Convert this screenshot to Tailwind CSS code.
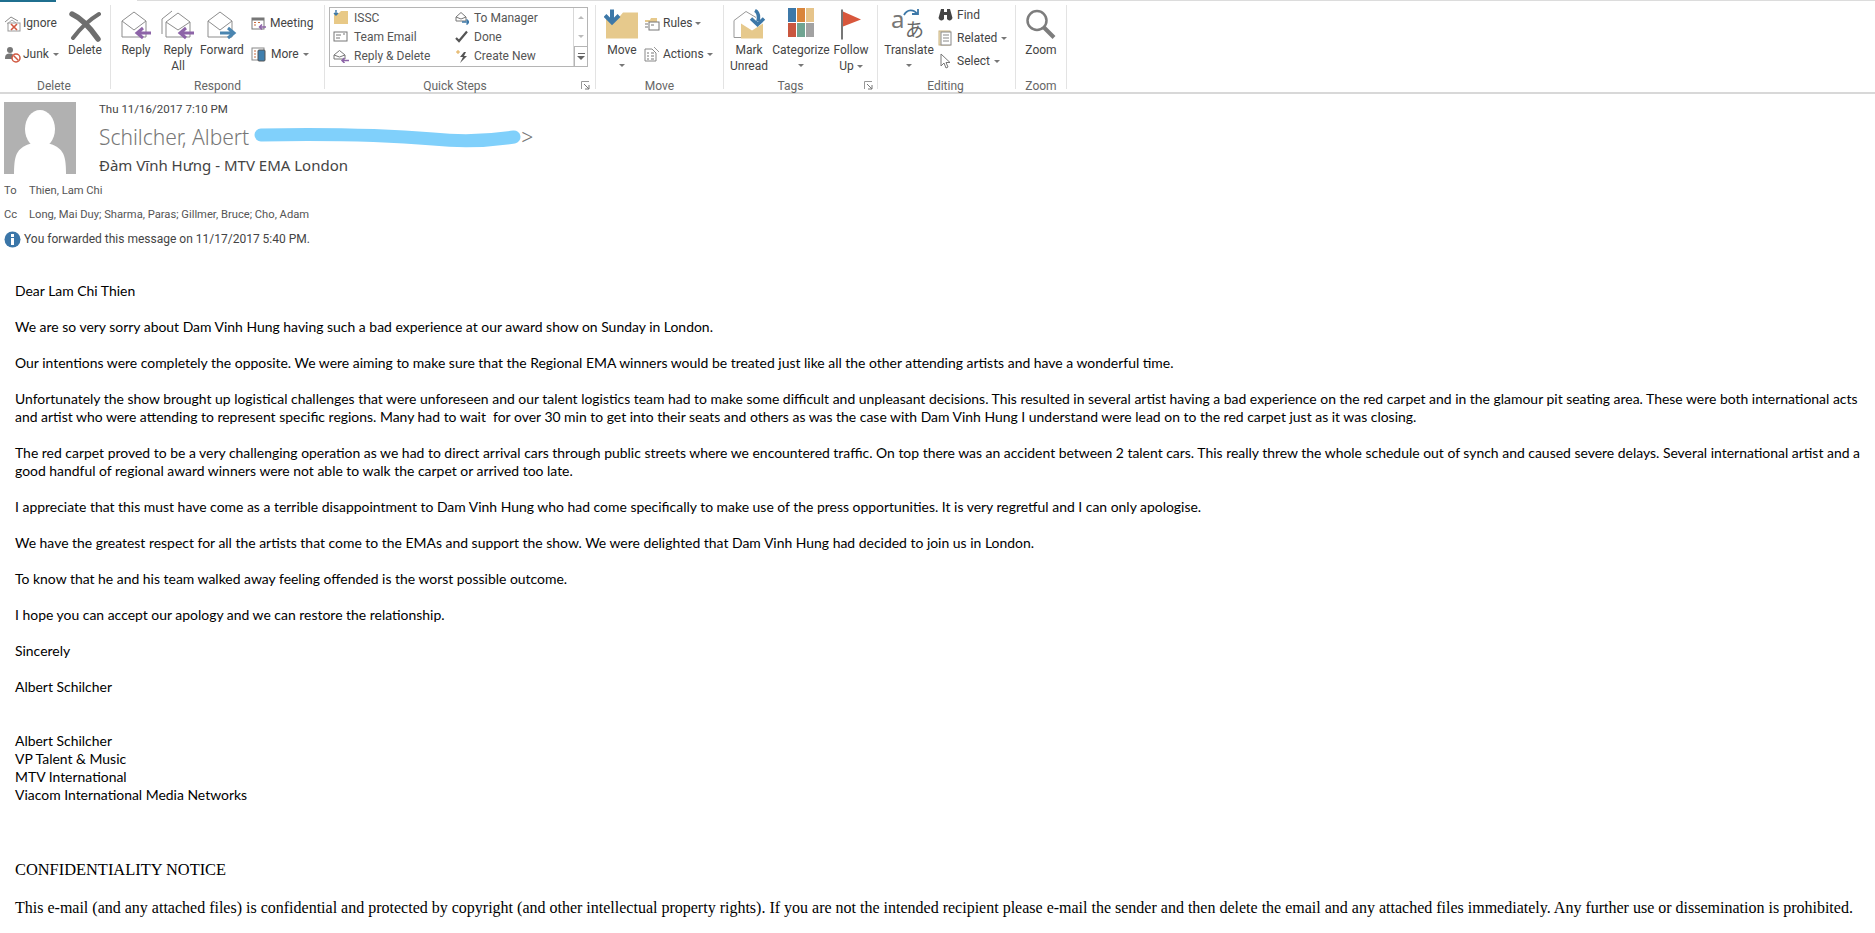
<!doctype html>
<html lang="en">
  <head>
    <meta charset="UTF-8" />
    <title>Đàm Vĩnh Hưng - MTV EMA London</title>
    <script src="https://cdn.jsdelivr.net/npm/@tailwindcss/browser@4"></script>
  </head>
  <body class="bg-white overflow-hidden h-[933px] font-['Roboto',sans-serif]">
    <!-- Tab strip edge -->
    <div class="flex h-[2px]">
      <div class="w-[56px] bg-[#1f6f8f]"></div>
      <div class="w-[81px] bg-white"></div>
      <div class="flex-1 bg-[#dcdcdc] h-px"></div>
    </div>

    <!-- Ribbon -->
    <div class="flex h-[92px] border-b-2 border-[#d8d8d8] text-[12px] leading-[16px] text-[#444]">
      <!-- Delete -->
      <div class="w-[111px] flex flex-col border-r border-[#e3e3e3] my-[3px]">
        <div class="flex h-[73px] shrink-0">
          <div class="w-[66px] pl-[4px] pt-[10px] flex flex-col gap-[15px]">
            <div class="flex items-center gap-[2px] h-[16px]">
              <svg width="17" height="17" viewBox="0 0 17 17" fill="none">
                <path d="M1 7 L7 2 L14 6" stroke="#8a8a8a" />
                <path d="M3 9 L8 5 L12 8" stroke="#aaa" />
                <rect x="4" y="8" width="12" height="8" fill="#fff" stroke="#999" />
                <path d="M7 9 L13 15 M13 9 L7 15" stroke="#d0573f" stroke-width="1.6" />
              </svg>
              <span>Ignore</span>
            </div>
            <div class="flex items-center gap-[2px] h-[16px]">
              <svg width="17" height="17" viewBox="0 0 17 17" fill="none">
                <circle cx="6" cy="4" r="3" fill="#777" />
                <path d="M1 13 C1 8 3 7.5 6 7.5 C9 7.5 10 9 10 13 Z" fill="#777" />
                <circle cx="12" cy="12" r="4" fill="#fff" stroke="#d0573f" stroke-width="1.5" />
                <path d="M9.5 9.5 L14.5 14.5" stroke="#d0573f" stroke-width="1.5" />
              </svg>
              <span>Junk</span>
              <span class="ml-[2px] border-x-[3px] border-t-[3px] border-x-transparent border-t-[#777]"></span>
            </div>
          </div>
          <div class="w-[38px] flex flex-col items-center pt-[5px]">
            <svg class="h-[32px] shrink-0" width="32" height="30" viewBox="0 0 32 30" fill="none">
              <path d="M3 3 C12 7 22 18 29 28" stroke="#6e6e6e" stroke-width="5.5" stroke-linecap="round" />
              <path d="M30 3 C20 9 10 19 4 27" stroke="#6e6e6e" stroke-width="4" stroke-linecap="round" />
            </svg>
            <span>Delete</span>
          </div>
        </div>
        <div class="h-[15px] -mb-[4px] text-center text-[#666] pr-[2px]">Delete</div>
      </div>

      <!-- Respond -->
      <div class="w-[214px] flex flex-col border-r border-[#e3e3e3] my-[3px]">
        <div class="flex h-[73px] shrink-0 pl-[4px]">
          <div class="w-[42px] flex flex-col items-center pt-[4px]">
            <svg class="h-[32px] shrink-0" width="32" height="30" viewBox="0 0 32 30" fill="none">
              <path d="M2 11 L14 2 L26 11 V27 H2 Z M2 11 L14 20 L26 11" stroke="#8d8d8d" />
              <path d="M31 23 H18 M23 18 L17 23 L23 28" stroke="#8d64a8" stroke-width="3" />
            </svg>
            <span class="mt-[1px]">Reply</span>
          </div>
          <div class="w-[42px] flex flex-col items-center pt-[4px]">
            <svg class="h-[32px] shrink-0" width="34" height="30" viewBox="0 0 34 30" fill="none">
              <path d="M1 24 V9 L11 1" stroke="#8d8d8d" />
              <path d="M5 12 L17 3 L29 12 V27 H5 Z M5 12 L17 20 L29 12" stroke="#8d8d8d" />
              <path d="M33 23 H20 M25 18 L19 23 L25 28" stroke="#8d64a8" stroke-width="3" />
            </svg>
            <span class="mt-[1px] text-center">Reply<br />All</span>
          </div>
          <div class="w-[46px] flex flex-col items-center pt-[4px]">
            <svg class="h-[32px] shrink-0" width="32" height="30" viewBox="0 0 32 30" fill="none">
              <path d="M2 11 L14 2 L26 11 V27 H2 Z M2 11 L14 20 L26 11" stroke="#8d8d8d" />
              <path d="M14 23 H27 M22 18 L28 23 L22 28" stroke="#4a85b0" stroke-width="3" />
            </svg>
            <span class="mt-[1px]">Forward</span>
          </div>
          <div class="ml-[6px] pt-[10px] flex flex-col gap-[15px]">
            <div class="flex items-center gap-[4px] h-[16px]">
              <svg width="15" height="15" viewBox="0 0 15 15" fill="none">
                <rect x="1" y="2" width="12" height="11" fill="#fff" stroke="#777" />
                <rect x="1" y="2" width="12" height="2.5" fill="#777" />
                <path d="M3 6.5 H5 M7 6.5 H9 M3 9 H5" stroke="#c96a3c" stroke-width="1.2" />
                <path d="M15 11 H9 M11 8.5 L8.5 11 L11 13.5" stroke="#8d64a8" stroke-width="1.5" />
              </svg>
              <span>Meeting</span>
            </div>
            <div class="flex items-center gap-[4px] h-[16px]">
              <svg width="16" height="15" viewBox="0 0 16 15" fill="none">
                <rect x="1" y="1" width="12" height="12" fill="#fff" stroke="#888" />
                <path d="M3 4 H5 M3 7 H5 M3 10 H5" stroke="#c96a3c" />
                <rect x="7" y="3" width="7" height="11" rx="1" fill="#3f7fae" stroke="#555" />
              </svg>
              <span>More</span>
              <span class="border-x-[3px] border-t-[3px] border-x-transparent border-t-[#777]"></span>
            </div>
          </div>
        </div>
        <div class="h-[15px] -mb-[4px] text-center text-[#666]">Respond</div>
      </div>

      <!-- Quick Steps -->
      <div class="w-[271px] flex flex-col border-r border-[#e3e3e3] my-[3px]">
        <div class="h-[73px] shrink-0 pl-[4px] pt-[2px]">
          <div class="w-[259px] h-[60px] border border-[#b5b5b5] flex">
            <div class="flex-1 grid grid-cols-[122px_1fr] grid-rows-3 items-center pl-[3px] text-[#555]">
              <div class="flex items-center gap-[5px]">
                <svg width="16" height="16" viewBox="0 0 16 16" fill="none">
                  <path d="M1 3 H6 L8 1 H15 V14 H1 Z" fill="#e8c987" />
                  <path d="M3 0 V4 M1 3 L3 5 L5 3" stroke="#3d78a8" stroke-width="1.4" />
                </svg>
                <span>ISSC</span>
              </div>
              <div class="flex items-center gap-[5px]">
                <svg width="14" height="14" viewBox="0 0 14 14" fill="none">
                  <path d="M1 6 L6 1.5 L11 6 V10 H1 Z M1 6 L6 8 L11 6" stroke="#777" />
                  <path d="M7 11 H14 M11.5 8.5 L14 11 L11.5 13.5" stroke="#3d78a8" stroke-width="1.5" />
                </svg>
                <span>To Manager</span>
              </div>
              <div class="flex items-center gap-[5px]">
                <svg width="16" height="14" viewBox="0 0 16 14" fill="none">
                  <rect x="1" y="2" width="13" height="9" stroke="#777" />
                  <path d="M3 5 H8 M3 8 H7 M10 4 H12" stroke="#777" />
                </svg>
                <span>Team Email</span>
              </div>
              <div class="flex items-center gap-[5px]">
                <svg width="14" height="14" viewBox="0 0 14 14" fill="none">
                  <path d="M1 8 L4 11 L12 1.5" stroke="#555" stroke-width="2.2" />
                </svg>
                <span>Done</span>
              </div>
              <div class="flex items-center gap-[5px]">
                <svg width="16" height="14" viewBox="0 0 16 14" fill="none">
                  <path d="M1 6 L6.5 1.5 L12 6 V10 H1 Z M1 6 L6.5 8 L12 6" stroke="#777" />
                  <path d="M16 11.5 H9 M11.5 9 L9 11.5 L11.5 14" stroke="#8d64a8" stroke-width="1.5" />
                </svg>
                <span>Reply &amp; Delete</span>
              </div>
              <div class="flex items-center gap-[5px]">
                <svg width="14" height="15" viewBox="0 0 14 15" fill="none">
                  <path d="M9 3 L5 8 H8 L5 14 L12 7 H9 L11 3 Z" fill="#555" />
                  <path d="M3 1 V5 M1 3 H5" stroke="#e0a94e" />
                </svg>
                <span>Create New</span>
              </div>
            </div>
            <div class="w-[14px] flex flex-col border-l border-[#d8d8d8]">
              <div class="flex-1 flex items-center justify-center">
                <span class="border-x-[3px] border-b-[3px] border-x-transparent border-b-[#bbb]"></span>
              </div>
              <div class="flex-1 flex items-center justify-center">
                <span class="border-x-[3px] border-t-[3px] border-x-transparent border-t-[#bbb]"></span>
              </div>
              <div class="flex-1 flex flex-col gap-[2px] items-center justify-center border border-[#b5b5b5] -mr-px -mb-px">
                <span class="w-[7px] h-px bg-[#666]"></span>
                <span class="border-x-[4px] border-t-[4px] border-x-transparent border-t-[#666]"></span>
              </div>
            </div>
          </div>
        </div>
        <div class="relative h-[15px] -mb-[4px] text-center text-[#666] pr-[10px]">
          Quick Steps
          <svg class="absolute right-[5px] top-[3px]" width="9" height="9" viewBox="0 0 9 9" fill="none">
            <path d="M0.5 8 V0.5 H8" stroke="#999" />
            <path d="M3 3 L8 8 M4 8 H8 V4" stroke="#777" />
          </svg>
        </div>
      </div>

      <!-- Move -->
      <div class="w-[128px] flex flex-col border-r border-[#e3e3e3] my-[3px]">
        <div class="flex h-[73px] shrink-0 pl-[6px]">
          <div class="w-[40px] flex flex-col items-center pt-[3px]">
            <svg class="h-[33px] shrink-0" width="36" height="30" viewBox="0 0 36 30" fill="none">
              <path d="M2 9 H14 L19 3 H34 V29 H2 Z" fill="#e6c98c" />
              <path d="M8 0 V10 M1 6 L8 13 L15 6" stroke="#3d78a8" stroke-width="4" />
            </svg>
            <span class="mt-[1px]">Move</span>
            <span class="mt-[6px] border-x-[3px] border-t-[3px] border-x-transparent border-t-[#777]"></span>
          </div>
          <div class="ml-[2px] pt-[10px] flex flex-col gap-[15px]">
            <div class="flex items-center gap-[3px] h-[16px]">
              <svg width="16" height="15" viewBox="0 0 16 15" fill="none">
                <path d="M1 4 H6 L7 2 H13 V6 H1 Z" fill="#e6c98c" />
                <rect x="5" y="6" width="10" height="8" fill="#fff" stroke="#777" />
                <path d="M1 8 H4 M1 11 H4 M7 9 H10" stroke="#777" />
              </svg>
              <span>Rules</span>
              <span class="border-x-[3px] border-t-[3px] border-x-transparent border-t-[#777]"></span>
            </div>
            <div class="flex items-center gap-[3px] h-[16px]">
              <svg width="16" height="16" viewBox="0 0 16 16" fill="none">
                <path d="M1 3 H8 L12 7 V15 H1 Z" fill="#fff" stroke="#888" />
                <path d="M3 7 H5 M7 7 H10 M3 10 H5 M7 10 H10 M3 13 H5 M7 13 H10" stroke="#777" />
                <path d="M10 1 L15 6" stroke="#999" />
              </svg>
              <span>Actions</span>
              <span class="border-x-[3px] border-t-[3px] border-x-transparent border-t-[#777]"></span>
            </div>
          </div>
        </div>
        <div class="h-[15px] -mb-[4px] text-center text-[#666]">Move</div>
      </div>

      <!-- Tags -->
      <div class="w-[154px] flex flex-col border-r border-[#e3e3e3] my-[3px]">
        <div class="flex h-[73px] shrink-0 pl-[4px]">
          <div class="w-[42px] flex flex-col items-center pt-[3px]">
            <svg class="h-[33px] shrink-0" width="34" height="30" viewBox="0 0 34 30" fill="none">
              <path d="M2 11 L14 2 L24 8 M2 11 V28 H10" stroke="#999" />
              <path d="M9 14 L20 21 L31 14 V29 H9 Z" fill="#e6c98c" />
              <path d="M23 1 C27 3 27 7 26 12 M19 9 L25.5 15 L32 9" stroke="#3d78a8" stroke-width="3.5" />
            </svg>
            <span class="mt-[1px] text-center">Mark<br />Unread</span>
          </div>
          <div class="w-[62px] flex flex-col items-center pt-[3px]">
            <div class="h-[29px] shrink-0 grid grid-cols-3 grid-rows-2 gap-px w-[26px]">
              <span class="bg-[#3d78a8]"></span>
              <span class="bg-[#d9853b]"></span>
              <span class="bg-[#e6c48a]"></span>
              <span class="bg-[#c9573f]"></span>
              <span class="bg-[#6fa491]"></span>
              <span class="bg-[#a2a2a2]"></span>
            </div>
            <span class="mt-[5px]">Categorize</span>
            <span class="mt-[6px] border-x-[3px] border-t-[3px] border-x-transparent border-t-[#777]"></span>
          </div>
          <div class="w-[38px] flex flex-col items-center pt-[3px]">
            <svg class="h-[33px] shrink-0" width="24" height="30" viewBox="0 0 24 30" fill="none">
              <path d="M3 0 V30" stroke="#777" stroke-width="2" />
              <path d="M4 2 L22 10 L4 17 Z" fill="#d8573c" />
            </svg>
            <span class="mt-[1px]">Follow</span>
            <span class="flex items-center gap-[3px]">
              Up
              <span class="border-x-[3px] border-t-[3px] border-x-transparent border-t-[#777]"></span>
            </span>
          </div>
        </div>
        <div class="relative h-[15px] -mb-[4px] text-center text-[#666] pr-[20px]">
          Tags
          <svg class="absolute right-[4px] top-[3px]" width="9" height="9" viewBox="0 0 9 9" fill="none">
            <path d="M0.5 8 V0.5 H8" stroke="#999" />
            <path d="M3 3 L8 8 M4 8 H8 V4" stroke="#777" />
          </svg>
        </div>
      </div>

      <!-- Editing -->
      <div class="w-[138px] flex flex-col border-r border-[#e3e3e3] my-[3px]">
        <div class="flex h-[73px] shrink-0 pl-[8px]">
          <div class="w-[46px] flex flex-col items-center">
            <svg class="-mt-[3px] h-[39px] shrink-0" width="36" height="39" viewBox="0 -6 36 39">
              <text x="0" y="20" font-family="Noto Sans" font-size="24" fill="#777">a</text>
              <text x="14" y="29" font-family="Noto Sans CJK JP" font-size="19" fill="#666">あ</text>
              <path d="M13 7 C16 1 23 1 26 6 M21 6 H27 V1" stroke="#3d78a8" stroke-width="1.8" fill="none" />
            </svg>
            <span class="mt-[1px]">Translate</span>
            <span class="mt-[6px] border-x-[3px] border-t-[3px] border-x-transparent border-t-[#777]"></span>
          </div>
          <div class="ml-[6px] pt-[2px] flex flex-col gap-[7px]">
            <div class="flex items-center gap-[4px] h-[16px]">
              <svg width="15" height="14" viewBox="0 0 15 14" fill="#444">
                <path d="M3 1 H6 V4 H9 V1 H12 L14.5 10 A3 3 0 0 1 9 11 V7 H6 V11 A3 3 0 0 1 0.5 10 Z" />
              </svg>
              <span>Find</span>
            </div>
            <div class="flex items-center gap-[4px] h-[16px]">
              <svg width="15" height="16" viewBox="0 0 15 16" fill="none">
                <rect x="1" y="1" width="11" height="14" fill="#f3e6c6" stroke="#c9b27f" />
                <rect x="3" y="2" width="10" height="13" fill="#fff" stroke="#888" />
                <path d="M5 5 H11 M5 8 H11 M5 11 H11" stroke="#888" />
              </svg>
              <span>Related</span>
              <span class="border-x-[3px] border-t-[3px] border-x-transparent border-t-[#777]"></span>
            </div>
            <div class="flex items-center gap-[4px] h-[16px]">
              <svg width="15" height="16" viewBox="0 0 15 16" fill="#fff">
                <path d="M3 1 V13 L6 10 L8 15 L10 14 L8 9.500 H12 Z" stroke="#777" />
              </svg>
              <span>Select</span>
              <span class="border-x-[3px] border-t-[3px] border-x-transparent border-t-[#777]"></span>
            </div>
          </div>
        </div>
        <div class="h-[15px] -mb-[4px] text-center text-[#666] pr-[2px]">Editing</div>
      </div>

      <!-- Zoom -->
      <div class="w-[51px] flex flex-col border-r border-[#e3e3e3] my-[3px]">
        <div class="h-[73px] shrink-0 flex flex-col items-center pt-[3px]">
          <svg class="h-[33px] shrink-0" width="32" height="30" viewBox="0 0 32 30" fill="none">
            <circle cx="12" cy="11" r="9.500" stroke="#7d7d7d" stroke-width="2.500" />
            <path d="M19 18 L29 28" stroke="#7d7d7d" stroke-width="4" />
          </svg>
          <span class="mt-[1px]">Zoom</span>
        </div>
        <div class="h-[15px] -mb-[4px] text-center text-[#666]">Zoom</div>
      </div>
    </div>

    <!-- Message header -->
    <div class="flex pl-[4px] pt-[8px] h-[110px]">
      <div class="w-[72px] h-[72px] bg-[#b1b1b1] overflow-hidden shrink-0">
        <svg width="72" height="72" viewBox="0 0 72 72" fill="#fff">
          <ellipse cx="36" cy="27" rx="15" ry="19" />
          <path d="M10 72 C10 50 14 46 28 41 H44 C58 46 62 50 62 72 Z" />
        </svg>
      </div>
      <div class="ml-[23px] text-[#444]">
        <div class="text-[11.500px] leading-[14px]">Thu 11/16/2017 7:10 PM</div>
        <div class="flex items-center h-[28px] mt-[8px] font-['Noto_Sans',sans-serif]">
          <span class="text-[21px] font-light text-[#777] whitespace-nowrap">Schilcher, Albert</span>
          <svg class="ml-[4px]" width="268" height="24" viewBox="0 0 268 24" fill="none">
            <path d="M8 9 C60 8 130 9 180 13 C210 16 235 15 261 11" stroke="#80d0fb" stroke-width="13" stroke-linecap="round" />
          </svg>
          <span class="text-[21px] font-light text-[#777]">&gt;</span>
        </div>
        <div class="text-[15px] leading-[20px] mt-[3px] font-['Noto_Sans',sans-serif]">Đàm Vĩnh Hưng - MTV EMA London</div>
      </div>
    </div>
    <div class="pl-[4px] -mt-[25px] text-[11.200px] text-[#555]">
      <div class="flex h-[24px] items-center">
        <span class="w-[25px]">To</span>
        <span>Thien, Lam Chi</span>
      </div>
      <div class="flex h-[24px] items-center">
        <span class="w-[25px]">Cc</span>
        <span>Long, Mai Duy; Sharma, Paras; Gillmer, Bruce; Cho, Adam</span>
      </div>
      <div class="flex h-[24px] items-center gap-[3px] text-[12px] text-[#444]">
        <svg width="17" height="17" viewBox="0 0 17 17">
          <circle cx="8.500" cy="8.500" r="8" fill="#3b76a8" />
          <rect x="7" y="3" width="3" height="3" fill="#fff" />
          <rect x="7" y="7" width="3" height="7" fill="#fff" />
        </svg>
        <span>You forwarded this message on 11/17/2017 5:40 PM.</span>
      </div>
    </div>

    <!-- Message body -->
    <div class="pl-[15px] pt-[31px] text-[13.950px] leading-[18px] text-black font-['Lato',sans-serif] whitespace-nowrap">
      <p>Dear Lam Chi Thien</p>
      <p class="mt-[18px]">We are so very sorry about Dam Vinh Hung having such a bad experience at our award show on Sunday in London.</p>
      <p class="mt-[18px]">Our intentions were completely the opposite. We were aiming to make sure that the Regional EMA winners would be treated just like all the other attending artists and have a wonderful time.</p>
      <p class="mt-[18px]">Unfortunately the show brought up logistical challenges that were unforeseen and our talent logistics team had to make some difficult and unpleasant decisions. This resulted in several artist having a bad experience on the red carpet and in the glamour pit seating area. These were both international acts<br />and artist who were attending to represent specific regions. Many had to wait&nbsp; for over 30 min to get into their seats and others as was the case with Dam Vinh Hung I understand were lead on to the red carpet just as it was closing.</p>
      <p class="mt-[18px]">The red carpet proved to be a very challenging operation as we had to direct arrival cars through public streets where we encountered traffic. On top there was an accident between 2 talent cars. This really threw the whole schedule out of synch and caused severe delays. Several international artist and a<br />good handful of regional award winners were not able to walk the carpet or arrived too late.</p>
      <p class="mt-[18px]">I appreciate that this must have come as a terrible disappointment to Dam Vinh Hung who had come specifically to make use of the press opportunities. It is very regretful and I can only apologise.</p>
      <p class="mt-[18px]">We have the greatest respect for all the artists that come to the EMAs and support the show. We were delighted that Dam Vinh Hung had decided to join us in London.</p>
      <p class="mt-[18px]">To know that he and his team walked away feeling offended is the worst possible outcome.</p>
      <p class="mt-[18px]">I hope you can accept our apology and we can restore the relationship.</p>
      <p class="mt-[18px]">Sincerely</p>
      <p class="mt-[18px]">Albert Schilcher</p>
      <p class="mt-[36px]">Albert Schilcher<br />VP Talent &amp; Music<br />MTV International<br />Viacom International Media Networks</p>
      <div class="font-['Liberation_Serif',serif]">
        <p class="mt-[56px] text-[16.400px] leading-[20px]">CONFIDENTIALITY NOTICE</p>
        <p class="mt-[18px] text-[16px] leading-[20px]">This e-mail (and any attached files) is confidential and protected by copyright (and other intellectual property rights). If you are not the intended recipient please e-mail the sender and then delete the email and any attached files immediately. Any further use or dissemination is prohibited.</p>
      </div>
    </div>
  </body>
</html>
